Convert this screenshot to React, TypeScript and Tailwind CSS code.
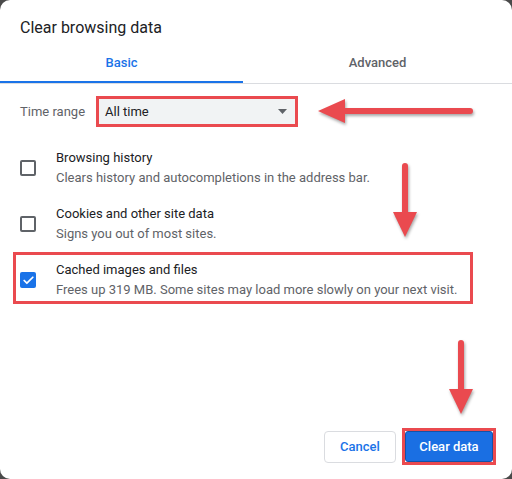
import { Check } from 'lucide-react';

const RED = '#ea4a4f';

function Arrow({ dir }: { dir: 'left' | 'down' }) {
  if (dir === 'left') {
    return (
      <svg width="160" height="30" viewBox="0 0 160 30" className="drop-shadow-[1px_2px_1.5px_rgba(0,0,0,0.35)]">
        <line x1="24" y1="14" x2="153" y2="14" stroke={RED} strokeWidth="6" strokeLinecap="round" />
        <polygon points="1,14 28,2 28,26" fill={RED} />
      </svg>
    );
  }
  return (
    <svg width="30" height="80" viewBox="0 0 30 80" className="drop-shadow-[1px_2px_1.5px_rgba(0,0,0,0.35)]">
      <line x1="14" y1="4" x2="14" y2="52" stroke={RED} strokeWidth="6" strokeLinecap="round" />
      <polygon points="2,50 26,50 14,75" fill={RED} />
    </svg>
  );
}

function CheckRow({
  title,
  sub,
  checked,
  highlight,
}: {
  title: string;
  sub: string;
  checked?: boolean;
  highlight?: boolean;
}) {
  return (
    <div className="relative flex items-center gap-5 px-5 py-2">
      {checked ? (
        <div className="flex h-[16px] w-[16px] items-center justify-center rounded-[2px] bg-[#1a73e8]">
          <Check size={13} strokeWidth={3.2} className="text-white" />
        </div>
      ) : (
        <div className="h-[16px] w-[16px] rounded-[2px] border-2 border-[#5f6368]" />
      )}
      <div className="text-[13px] leading-[20px]">
        <div className="text-[#202124]">{title}</div>
        <div className="text-[#5f6368]">{sub}</div>
      </div>
      {highlight && (
        <div className="absolute left-[13px] top-[0px] h-[52px] w-[460px] border-[3px] border-[#ea4a4f]" />
      )}
    </div>
  );
}

function App() {
  return (
    <div className="relative h-[479px] w-[512px] bg-[#4a4a4a] font-['Roboto',sans-serif]">
      <div className="flex h-full flex-col rounded-[10px] bg-white">
        <h2 className="px-5 pt-[16px] text-[16px] leading-[24px] text-[#202124]">
          Clear browsing data
        </h2>

        <div className="mt-[4px] flex border-b border-[#dadce0] text-[13px] font-medium">
          <div className="flex w-[243px] flex-col">
            <span className="flex h-[37px] items-center justify-center text-[#1a73e8]">Basic</span>
            <div className="h-[2px] bg-[#1a73e8]" />
          </div>
          <div className="flex flex-1 flex-col">
            <span className="flex h-[37px] items-center justify-center text-[#5f6368]">Advanced</span>
            <div className="h-[2px]" />
          </div>
        </div>

        <div className="mt-[15px] flex items-center px-5 text-[13px]">
          <span className="w-[79px] text-[#5f6368]">Time range</span>
          <div className="flex h-[25px] w-[196px] items-center justify-between bg-[#f1f3f4] pl-[6px] pr-[8px] text-[#202124] outline-3 outline-[#ea4a4f]">
            <span>All time</span>
            <svg width="9" height="5" viewBox="0 0 9 5">
              <polygon points="0,0 9,0 4.5,5" fill="#5f6368" />
            </svg>
          </div>
        </div>

        <div className="mt-[16px] flex flex-col">
          <CheckRow title="Browsing history" sub="Clears history and autocompletions in the address bar." />
          <CheckRow title="Cookies and other site data" sub="Signs you out of most sites." />
          <CheckRow
            title="Cached images and files"
            sub="Frees up 319 MB. Some sites may load more slowly on your next visit."
            checked
            highlight
          />
        </div>

        <div className="mt-auto flex justify-end gap-[9px] pb-[16px] pr-[19px] text-[13px] font-medium">
          <button className="h-[32px] w-[72px] rounded-[4px] border border-[#dadce0] bg-white text-[#1a73e8]">
            Cancel
          </button>
          <button className="relative h-[31px] w-[88px] rounded-[3px] border border-[#1452a8] bg-[#1a6fe3] text-white">
            Clear data
            <span className="absolute -inset-[4px] border-[3px] border-[#ea4a4f]" />
          </button>
        </div>
      </div>

      <div className="absolute left-[317px] top-[97px]">
        <Arrow dir="left" />
      </div>
      <div className="absolute left-[391px] top-[162px]">
        <Arrow dir="down" />
      </div>
      <div className="absolute left-[447px] top-[339px]">
        <Arrow dir="down" />
      </div>
    </div>
  );
}

export default App;
